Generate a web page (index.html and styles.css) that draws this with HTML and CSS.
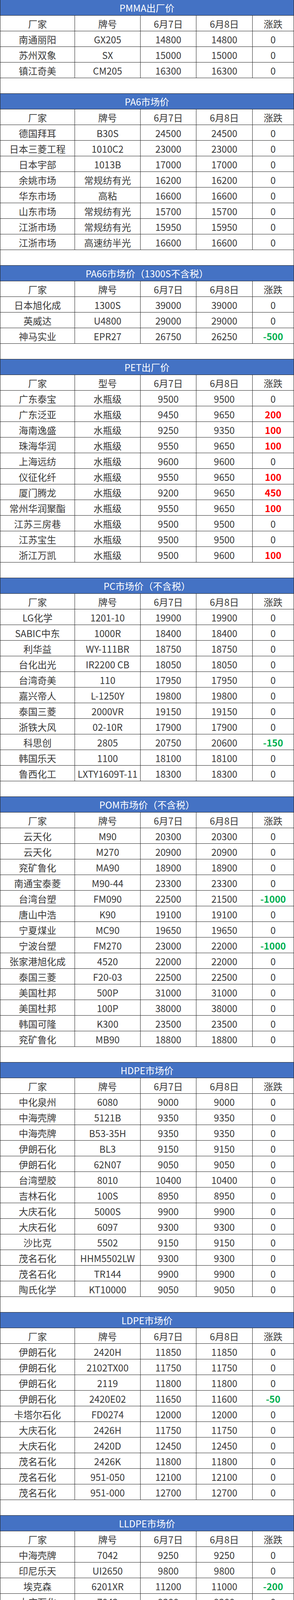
FILE: index.html
```html
<!DOCTYPE html>
<html lang="zh-CN">
<head>
<meta charset="utf-8">
<title>塑料价格</title>
<link rel="stylesheet" href="styles.css">
</head>
<body>
<div class="sheet">

<div class="t">PMMA出厂价</div>
<div class="r"><span>厂家</span><span>牌号</span><span>6月7日</span><span>6月8日</span><span>涨跌</span></div>
<div class="r"><span>南通丽阳</span><span>GX205</span><span>14800</span><span>14800</span><span>0</span></div>
<div class="r"><span>苏州双象</span><span>SX</span><span>15000</span><span>15000</span><span>0</span></div>
<div class="r"><span>镇江奇美</span><span>CM205</span><span>16300</span><span>16300</span><span>0</span></div>
<div class="g"></div>

<div class="t">PA6市场价</div>
<div class="r"><span>厂家</span><span>牌号</span><span>6月7日</span><span>6月8日</span><span>涨跌</span></div>
<div class="r"><span>德国拜耳</span><span>B30S</span><span>24500</span><span>24500</span><span>0</span></div>
<div class="r"><span>日本三菱工程</span><span>1010C2</span><span>23000</span><span>23000</span><span>0</span></div>
<div class="r"><span>日本宇部</span><span>1013B</span><span>17000</span><span>17000</span><span>0</span></div>
<div class="r"><span>余姚市场</span><span>常规纺有光</span><span>16200</span><span>16200</span><span>0</span></div>
<div class="r"><span>华东市场</span><span>高粘</span><span>16600</span><span>16600</span><span>0</span></div>
<div class="r"><span>山东市场</span><span>常规纺有光</span><span>15700</span><span>15700</span><span>0</span></div>
<div class="r"><span>江浙市场</span><span>常规纺有光</span><span>15950</span><span>15950</span><span>0</span></div>
<div class="r"><span>江浙市场</span><span>高速纺半光</span><span>16600</span><span>16600</span><span>0</span></div>
<div class="g"></div>

<div class="t">PA66市场价（1300S不含税）</div>
<div class="r"><span>厂家</span><span>牌号</span><span>6月7日</span><span>6月8日</span><span>涨跌</span></div>
<div class="r"><span>日本旭化成</span><span>1300S</span><span>39000</span><span>39000</span><span>0</span></div>
<div class="r"><span>英威达</span><span>U4800</span><span>29000</span><span>29000</span><span>0</span></div>
<div class="r"><span>神马实业</span><span>EPR27</span><span>26750</span><span>26250</span><span class="dn">-500</span></div>
<div class="g"></div>

<div class="t">PET出厂价</div>
<div class="r"><span>厂家</span><span>型号</span><span>6月7日</span><span>6月8日</span><span>涨跌</span></div>
<div class="r"><span>广东泰宝</span><span>水瓶级</span><span>9500</span><span>9500</span><span>0</span></div>
<div class="r"><span>广东泛亚</span><span>水瓶级</span><span>9450</span><span>9650</span><span class="up">200</span></div>
<div class="r"><span>海南逸盛</span><span>水瓶级</span><span>9250</span><span>9350</span><span class="up">100</span></div>
<div class="r"><span>珠海华润</span><span>水瓶级</span><span>9550</span><span>9650</span><span class="up">100</span></div>
<div class="r"><span>上海远纺</span><span>水瓶级</span><span>9600</span><span>9600</span><span>0</span></div>
<div class="r"><span>仪征化纤</span><span>水瓶级</span><span>9550</span><span>9650</span><span class="up">100</span></div>
<div class="r"><span>厦门腾龙</span><span>水瓶级</span><span>9200</span><span>9650</span><span class="up">450</span></div>
<div class="r"><span>常州华润聚酯</span><span>水瓶级</span><span>9550</span><span>9650</span><span class="up">100</span></div>
<div class="r"><span>江苏三房巷</span><span>水瓶级</span><span>9500</span><span>9500</span><span>0</span></div>
<div class="r"><span>江苏宝生</span><span>水瓶级</span><span>9500</span><span>9500</span><span>0</span></div>
<div class="r"><span>浙江万凯</span><span>水瓶级</span><span>9500</span><span>9600</span><span class="up">100</span></div>
<div class="g"></div>

<div class="t">PC市场价（不含税）</div>
<div class="r"><span>厂家</span><span>牌号</span><span>6月7日</span><span>6月8日</span><span>涨跌</span></div>
<div class="r"><span>LG化学</span><span>1201-10</span><span>19900</span><span>19900</span><span>0</span></div>
<div class="r"><span>SABIC中东</span><span>1000R</span><span>18400</span><span>18400</span><span>0</span></div>
<div class="r"><span>利华益</span><span>WY-111BR</span><span>18750</span><span>18750</span><span>0</span></div>
<div class="r"><span>台化出光</span><span>IR2200 CB</span><span>18050</span><span>18050</span><span>0</span></div>
<div class="r"><span>台湾奇美</span><span>110</span><span>17950</span><span>17950</span><span>0</span></div>
<div class="r"><span>嘉兴帝人</span><span>L-1250Y</span><span>19800</span><span>19800</span><span>0</span></div>
<div class="r"><span>泰国三菱</span><span>2000VR</span><span>19150</span><span>19150</span><span>0</span></div>
<div class="r"><span>浙铁大风</span><span>02-10R</span><span>17900</span><span>17900</span><span>0</span></div>
<div class="r"><span>科思创</span><span>2805</span><span>20750</span><span>20600</span><span class="dn">-150</span></div>
<div class="r"><span>韩国乐天</span><span>1100</span><span>18100</span><span>18100</span><span>0</span></div>
<div class="r"><span>鲁西化工</span><span>LXTY1609T-11</span><span>18300</span><span>18300</span><span>0</span></div>
<div class="g"></div>

<div class="t">POM市场价（不含税）</div>
<div class="r"><span>厂家</span><span>牌号</span><span>6月7日</span><span>6月8日</span><span>涨跌</span></div>
<div class="r"><span>云天化</span><span>M90</span><span>20300</span><span>20300</span><span>0</span></div>
<div class="r"><span>云天化</span><span>M270</span><span>20900</span><span>20900</span><span>0</span></div>
<div class="r"><span>兖矿鲁化</span><span>MA90</span><span>18900</span><span>18900</span><span>0</span></div>
<div class="r"><span>南通宝泰菱</span><span>M90-44</span><span>23300</span><span>23300</span><span>0</span></div>
<div class="r"><span>台湾台塑</span><span>FM090</span><span>22500</span><span>21500</span><span class="dn">-1000</span></div>
<div class="r"><span>唐山中浩</span><span>K90</span><span>19100</span><span>19100</span><span>0</span></div>
<div class="r"><span>宁夏煤业</span><span>MC90</span><span>19650</span><span>19650</span><span>0</span></div>
<div class="r"><span>宁波台塑</span><span>FM270</span><span>23000</span><span>22000</span><span class="dn">-1000</span></div>
<div class="r"><span>张家港旭化成</span><span>4520</span><span>22000</span><span>22000</span><span>0</span></div>
<div class="r"><span>泰国三菱</span><span>F20-03</span><span>22500</span><span>22500</span><span>0</span></div>
<div class="r"><span>美国杜邦</span><span>500P</span><span>31000</span><span>31000</span><span>0</span></div>
<div class="r"><span>美国杜邦</span><span>100P</span><span>38000</span><span>38000</span><span>0</span></div>
<div class="r"><span>韩国可隆</span><span>K300</span><span>23500</span><span>23500</span><span>0</span></div>
<div class="r"><span>兖矿鲁化</span><span>MB90</span><span>18800</span><span>18800</span><span>0</span></div>
<div class="g"></div>

<div class="t">HDPE市场价</div>
<div class="r"><span>厂家</span><span>牌号</span><span>6月7日</span><span>6月8日</span><span>涨跌</span></div>
<div class="r"><span>中化泉州</span><span>6080</span><span>9000</span><span>9000</span><span>0</span></div>
<div class="r"><span>中海壳牌</span><span>5121B</span><span>9350</span><span>9350</span><span>0</span></div>
<div class="r"><span>中海壳牌</span><span>B53-35H</span><span>9350</span><span>9350</span><span>0</span></div>
<div class="r"><span>伊朗石化</span><span>BL3</span><span>9150</span><span>9150</span><span>0</span></div>
<div class="r"><span>伊朗石化</span><span>62N07</span><span>9050</span><span>9050</span><span>0</span></div>
<div class="r"><span>台湾塑胶</span><span>8010</span><span>10400</span><span>10400</span><span>0</span></div>
<div class="r"><span>吉林石化</span><span>100S</span><span>8950</span><span>8950</span><span>0</span></div>
<div class="r"><span>大庆石化</span><span>5000S</span><span>9900</span><span>9900</span><span>0</span></div>
<div class="r"><span>大庆石化</span><span>6097</span><span>9300</span><span>9300</span><span>0</span></div>
<div class="r"><span>沙比克</span><span>5502</span><span>9150</span><span>9150</span><span>0</span></div>
<div class="r"><span>茂名石化</span><span>HHM5502LW</span><span>9300</span><span>9300</span><span>0</span></div>
<div class="r"><span>茂名石化</span><span>TR144</span><span>9900</span><span>9900</span><span>0</span></div>
<div class="r"><span>陶氏化学</span><span>KT10000</span><span>9050</span><span>9050</span><span>0</span></div>
<div class="g"></div>

<div class="t">LDPE市场价</div>
<div class="r"><span>厂家</span><span>牌号</span><span>6月7日</span><span>6月8日</span><span>涨跌</span></div>
<div class="r"><span>伊朗石化</span><span>2420H</span><span>11850</span><span>11850</span><span>0</span></div>
<div class="r"><span>伊朗石化</span><span>2102TX00</span><span>11750</span><span>11750</span><span>0</span></div>
<div class="r"><span>伊朗石化</span><span>2119</span><span>11800</span><span>11800</span><span>0</span></div>
<div class="r"><span>伊朗石化</span><span>2420E02</span><span>11650</span><span>11600</span><span class="dn">-50</span></div>
<div class="r"><span>卡塔尔石化</span><span>FD0274</span><span>12000</span><span>12000</span><span>0</span></div>
<div class="r"><span>大庆石化</span><span>2426H</span><span>11750</span><span>11750</span><span>0</span></div>
<div class="r"><span>大庆石化</span><span>2420D</span><span>12450</span><span>12450</span><span>0</span></div>
<div class="r"><span>茂名石化</span><span>2426K</span><span>11800</span><span>11800</span><span>0</span></div>
<div class="r"><span>茂名石化</span><span>951-050</span><span>12100</span><span>12100</span><span>0</span></div>
<div class="r"><span>茂名石化</span><span>951-000</span><span>12700</span><span>12700</span><span>0</span></div>
<div class="g"></div>

<div class="t">LLDPE市场价</div>
<div class="r"><span>厂家</span><span>牌号</span><span>6月7日</span><span>6月8日</span><span>涨跌</span></div>
<div class="r"><span>中海壳牌</span><span>7042</span><span>9250</span><span>9250</span><span>0</span></div>
<div class="r"><span>印尼乐天</span><span>UI2650</span><span>9800</span><span>9800</span><span>0</span></div>
<div class="r"><span>埃克森</span><span>6201XR</span><span>11200</span><span>11000</span><span class="dn">-200</span></div>
<div class="r"><span>大庆石化</span><span>7042</span><span>9200</span><span>9200</span><span>0</span></div>
<div class="r"><span>广州石化</span><span>7042</span><span>9300</span><span>9400</span><span class="up">100</span></div>
<div class="r"><span>广州石化</span><span>2001</span><span>9300</span><span>9300</span><span>0</span></div>
<div class="r"><span>抚顺石化</span><span>7042</span><span>9200</span><span>9200</span><span>0</span></div>
<div class="r"><span>沙比克</span><span>218WJ</span><span>9500</span><span>9500</span><span>0</span></div>
<div class="r"><span>泰国PTT</span><span>7420D</span><span>9600</span><span>9600</span><span>0</span></div>
<div class="r"><span>茂名石化</span><span>7042</span><span>9800</span><span>9800</span><span>0</span></div>
<div class="r"><span>阿联酋博禄化工</span><span>FB2230</span><span>11500</span><span>11500</span><span>0</span></div>
<div class="g"></div>

<div class="t">GPPS市场价</div>
<div class="r"><span>厂家</span><span>牌号</span><span>6月7日</span><span>6月8日</span><span>涨跌</span></div>
<div class="r"><span>上海赛科</span><span>123P</span><span>10550</span><span>10550</span><span>0</span></div>
<div class="r"><span>台湾台化</span><span>5250</span><span>10400</span><span>10500</span><span class="up">100</span></div>
<div class="r"><span>宁波台化</span><span>5250</span><span>10300</span><span>10450</span><span class="up">150</span></div>
<div class="r"><span>广州石化</span><span>525</span><span>10000</span><span>10300</span><span class="up">300</span></div>
<div class="r"><span>泰国石化</span><span>GP150</span><span>10400</span><span>10400</span><span>0</span></div>
<div class="r"><span>镇江奇美</span><span>PG-33</span><span>10600</span><span>10750</span><span class="up">150</span></div>
<div class="r"><span>广东星辉</span><span>SKG-118</span><span>10180</span><span>10350</span><span class="up">170</span></div>
<div class="r"><span>惠州仁信</span><span>525B</span><span>10080</span><span>10080</span><span>0</span></div>
<div class="r"><span>福建天原</span><span>635</span><span>9950</span><span>10350</span><span class="up">400</span></div>
<div class="r"><span>香港石化</span><span>1841H</span><span>10050</span><span>10250</span><span class="up">200</span></div>
<div class="g"></div>

<div class="t">HIPS市场价</div>
<div class="r"><span>厂家</span><span>牌号</span><span>6月7日</span><span>6月8日</span><span>涨跌</span></div>
<div class="r"><span>上海赛科</span><span>622P</span><span>10750</span><span>10900</span><span class="up">150</span></div>
<div class="r"><span>台湾台化</span><span>8250</span><span>11250</span><span>11400</span><span class="up">150</span></div>
<div class="r"><span>宁波台化</span><span>8250</span><span>11300</span><span>11400</span><span class="up">100</span></div>
<div class="r"><span>广州石化</span><span>660</span><span>10750</span><span>10800</span><span class="up">50</span></div>
<div class="r"><span>泰国石化</span><span>HI650</span><span>11220</span><span>11250</span><span class="up">30</span></div>
<div class="r"><span>镇江奇美</span><span>PH-88</span><span>11400</span><span>11400</span><span>0</span></div>
<div class="r"><span>广东星辉</span><span>SKH-127</span><span>10920</span><span>11050</span><span class="up">130</span></div>
<div class="r"><span>香港石化</span><span>SR600</span><span>11050</span><span>11100</span><span class="up">50</span></div>
<div class="r"><span>湛江新中美</span><span>990</span><span>10600</span><span>10700</span><span class="up">100</span></div>
<div class="g"></div>

<div class="t">ABS市场价（不含税）</div>
<div class="r"><span>厂家</span><span>牌号</span><span>6月7日</span><span>6月8日</span><span>涨跌</span></div>
<div class="r"><span>台湾台化</span><span>15A1</span><span>13400</span><span>13400</span><span>0</span></div>
<div class="r"><span>台湾奇美</span><span>757</span><span>14250</span><span>14170</span><span class="dn">-80</span></div>
<div class="r"><span>吉林石化</span><span>0215A</span><span>11750</span><span>11950</span><span class="up">200</span></div>
<div class="r"><span>大庆石化</span><span>750A</span><span>11850</span><span>11950</span><span class="up">100</span></div>
<div class="r"><span>天津大沽</span><span>DG417</span><span>11900</span><span>11950</span><span class="up">50</span></div>
<div class="r"><span>宁波LG甬兴</span><span>121H</span><span>11800</span><span>11800</span><span>0</span></div>
<div class="r"><span>宁波台化</span><span>AG15A1</span><span>12180</span><span>12200</span><span class="up">20</span></div>
<div class="r"><span>宁波台化</span><span>AG15E1</span><span>12100</span><span>12200</span><span class="up">100</span></div>
<div class="r"><span>镇江奇美</span><span>PA-757K</span><span>12080</span><span>12150</span><span class="up">70</span></div>
<div class="r"><span>镇江奇美</span><span>PA-707K</span><span>11950</span><span>12050</span><span class="up">100</span></div>
<div class="r"><span>韩国巴斯夫</span><span>GP-22</span><span>13700</span><span>13550</span><span class="dn">-150</span></div>
<div class="g"></div>

<div class="t">PP市场价</div>
<div class="r"><span>厂家</span><span>牌号</span><span>6月7日</span><span>6月8日</span><span>涨跌</span></div>
<div class="r"><span>大庆炼化</span><span>T30S</span><span>9050</span><span>9150</span><span class="up">100</span></div>
<div class="r"><span>抚顺石化</span><span>Z30S</span><span>9000</span><span>8970</span><span class="dn">-30</span></div>
<div class="r"><span>中景石化</span><span>V30G</span><span>9250</span><span>9250</span><span>0</span></div>
<div class="r"><span>独山子石化</span><span>K8003</span><span>9350</span><span>9250</span><span class="dn">-100</span></div>
<div class="r"><span>大庆炼化</span><span>EPS30R</span><span>9150</span><span>9100</span><span class="dn">-50</span></div>
<div class="r"><span>北海炼厂</span><span>PPH-MN60</span><span>9200</span><span>9200</span><span>0</span></div>
<div class="r"><span>宁夏煤业</span><span>1100N</span><span>9050</span><span>9050</span><span>0</span></div>
<div class="r"><span>延长中煤</span><span>L5E89</span><span>9000</span><span>9100</span><span class="up">100</span></div>
<div class="r"><span>万华化学</span><span>456J</span><span>8950</span><span>9000</span><span class="up">50</span></div>
<div class="r"><span>宁夏煤业</span><span>2500H</span><span>9150</span><span>9100</span><span class="dn">-50</span></div>
<div class="g"></div>

<div class="t">EPS市场价</div>
<div class="r"><span>地区</span><span>型号</span><span>6月7日</span><span>6月8日</span><span>涨跌</span></div>
<div class="r"><span>华南市场</span><span>普通料</span><span>12000</span><span>12100</span><span class="up">100</span></div>
<div class="r"><span>华南市场</span><span>阻燃料</span><span>13000</span><span>13100</span><span class="up">100</span></div>
<div class="r"><span>江苏市场</span><span>普通料</span><span>11900</span><span>12000</span><span class="up">100</span></div>
<div class="r"><span>江苏市场</span><span>阻燃料</span><span>12800</span><span>12800</span><span>0</span></div>
<div class="r"><span>山东市场</span><span>普通料</span><span>11350</span><span>11550</span><span class="up">200</span></div>
<div class="r"><span>山东市场</span><span>阻燃料</span><span>12200</span><span>12400</span><span class="up">200</span></div>
<div class="g"></div>

<div class="t">PVC出厂价</div>
<div class="r"><span>厂家</span><span>牌号</span><span>6月7日</span><span>6月8日</span><span>涨跌</span></div>
<div class="r"><span>宁夏英力特</span><span>SG-3</span><span>8500</span><span>8500</span><span>0</span></div>
<div class="r"><span>河南联创</span><span>SG-3</span><span>8700</span><span>8700</span><span>0</span></div>
<div class="r"><span>内蒙三联</span><span>SG-5</span><span>8100</span><span>8100</span><span>0</span></div>
<div class="r"><span>新疆中泰</span><span>SG-5</span><span>7950</span><span>7950</span><span>0</span></div>
<div class="r"><span>陕西北元</span><span>SG-5</span><span>8500</span><span>8600</span><span class="up">100</span></div>
<div class="r"><span>内蒙君正</span><span>SG-5</span><span>8300</span><span>8300</span><span>0</span></div>
<div class="r"><span>四川金路</span><span>SG-5</span><span>8650</span><span>8700</span><span class="up">50</span></div>
<div class="r"><span>宜宾天原</span><span>SG-5</span><span>8700</span><span>8750</span><span class="up">50</span></div>
<div class="r"><span>德州实华</span><span>SG-8</span><span>8650</span><span>8800</span><span class="up">150</span></div>
<div class="r"><span>陕西北元</span><span>SG-8</span><span>8750</span><span>8800</span><span class="up">50</span></div>
<div class="g"></div>

<div class="t">EVA市场价</div>
<div class="r"><span>厂家</span><span>牌号</span><span>6月7日</span><span>6月8日</span><span>涨跌</span></div>
<div class="r"><span>台湾台塑</span><span>7470M</span><span>29200</span><span>29200</span><span>0</span></div>
<div class="r"><span>燕山石化</span><span>18J3</span><span>24000</span><span>24000</span><span>0</span></div>
<div class="r"><span>台湾塑胶</span><span>7350M</span><span>26000</span><span>26000</span><span>0</span></div>
<div class="r"><span>台湾聚合</span><span>3330</span><span>30000</span><span>30000</span><span>0</span></div>
<div class="r"><span>扬子巴斯夫</span><span>6110M</span><span>28900</span><span>28900</span><span>0</span></div>
<div class="r"><span>扬子巴斯夫</span><span>5110J</span><span>26300</span><span>26300</span><span>0</span></div>
<div class="r"><span>江苏斯尔邦</span><span>V6020M</span><span>28500</span><span>28800</span><span class="up">300</span></div>
<div class="r"><span>韩国韩华</span><span>2518</span><span>24300</span><span>24300</span><span>0</span></div>
<div class="n">注：ABS、PC、POM、PA66（1300S）不含税</div>

</div>
</body>
</html>
```

FILE: styles.css
```css
html, body {
  margin: 0;
  padding: 0;
  background: #ffffff;
}

body {
  font-family: "Noto Sans CJK SC", "Noto Sans", "Liberation Sans", sans-serif;
  font-size: 24px;
  color: #3a3a3a;
}

.sheet {
  width: 753px;
  box-sizing: border-box;
  border-left: 1px solid #222222;
  border-right: 1px solid #222222;
}

.t {
  height: 40px;
  box-sizing: border-box;
  border-bottom: 1px solid #222222;
  background: #4472c4;
  color: #ffffff;
  display: flex;
  align-items: center;
  justify-content: center;
  line-height: 1;
  padding-top: 1px;
}

.r {
  display: grid;
  grid-template-columns: 191px 168px 143px 144px 105px;
  height: 40px;
  box-sizing: border-box;
  border-bottom: 1px solid #222222;
}

.r > span {
  display: flex;
  align-items: center;
  justify-content: center;
  border-right: 1px solid #222222;
  white-space: nowrap;
  line-height: 1;
  padding-top: 2px;
}

.r > span:last-child {
  border-right: 0;
}

.r > .up {
  color: #ff0000;
  font-weight: 700;
}

.r > .dn {
  color: #00b050;
  font-weight: 700;
}

.g {
  height: 40px;
  box-sizing: border-box;
  border-bottom: 1px solid #222222;
}

.n {
  height: 40px;
  box-sizing: border-box;
  border-bottom: 1px solid #222222;
  display: flex;
  align-items: center;
  justify-content: center;
  line-height: 1;
  padding-top: 2px;
}
```
